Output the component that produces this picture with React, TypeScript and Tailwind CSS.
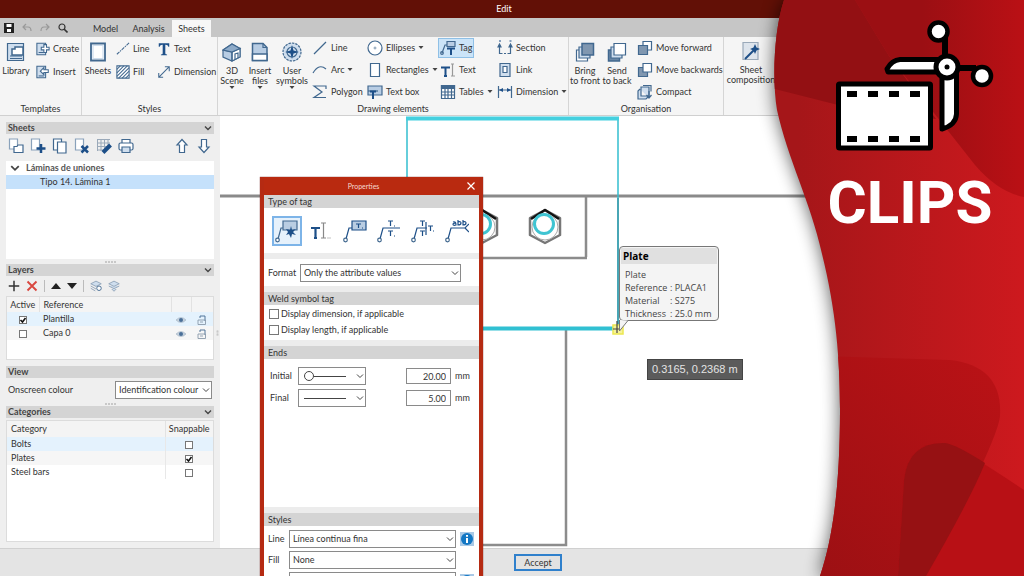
import type { ReactNode } from "react";
import clsx from "clsx";

const blue = "#41688f";
const navy = "#1d4f88";
const pale = "#cfdeee";

type IconProps = {
  children: ReactNode;
  className?: string;
  box?: string;
};

function Icon({ children, className = "size-4", box = "0 0 16 16" }: IconProps) {
  return (
    <svg
      viewBox={box}
      className={clsx("shrink-0", className)}
      fill="none"
      stroke={blue}
      strokeWidth="1.2"
      aria-hidden="true"
    >
      {children}
    </svg>
  );
}

function Caret() {
  return (
    <svg viewBox="0 0 6 4" className="h-1 w-1.5 shrink-0" fill="#444" aria-hidden="true">
      <path d="M.5 0h5L3 3z" />
    </svg>
  );
}

function Chevron({ className = "size-2", width = 1.4 }: { className?: string; width?: number }) {
  return (
    <svg viewBox="0 0 8 8" className={className} fill="none" stroke="#444" strokeWidth={width} aria-hidden="true">
      <path d="M1 2.5l3 3 3-3" />
    </svg>
  );
}

/* ---------- ribbon ---------- */

type BigButtonProps = {
  icon: ReactNode;
  lines: string[];
  caret?: boolean;
  className?: string;
};

function BigButton({ icon, lines, caret, className }: BigButtonProps) {
  return (
    <button type="button" className={clsx("flex shrink-0 flex-col items-center pt-1", className)}>
      {icon}
      <span className="mt-1 flex flex-col items-center leading-[10px] whitespace-nowrap">
        {lines.map((line) => (
          <span key={line}>{line}</span>
        ))}
      </span>
      {caret && <Caret />}
    </button>
  );
}

type SmallButtonProps = {
  icon: ReactNode;
  label: string;
  caret?: boolean;
  active?: boolean;
};

function SmallButton({ icon, label, caret, active }: SmallButtonProps) {
  return (
    <button
      type="button"
      className={clsx(
        "flex h-5 items-center gap-[3px] self-start border px-px whitespace-nowrap",
        active ? "border-[#8fc0e6] bg-[#cbe4f8]" : "border-transparent",
      )}
    >
      {icon}
      {label}
      {caret && <Caret />}
    </button>
  );
}

function Group({ title, className, children }: { title: string; className: string; children: ReactNode }) {
  return (
    <section className={clsx("flex shrink-0 flex-col border-r border-[#d5d5d5] pt-px", className)}>
      <div className="flex flex-1">{children}</div>
      <h2 className="h-[13px] text-center leading-[13px]">{title}</h2>
    </section>
  );
}

function Stack({ className, children }: { className: string; children: ReactNode }) {
  return <div className={clsx("flex shrink-0 flex-col", className)}>{children}</div>;
}

function Ribbon() {
  return (
    <div className="flex overflow-hidden border-b border-[#d0d0d0] bg-[#f5f5f5]">
      <Group title="Templates" className="w-[82px]">
        <BigButton
          className="w-8"
          lines={["Library"]}
          icon={
            <Icon className="size-5" box="0 0 20 20">
              <path d="M1.500 1.500h16v17h-16z" fill={pale} />
              <path d="M4 14h12M4 16.500h12" />
              <path d="M6 7h3V5h8v8H6z" fill="#fff" strokeWidth="1.500" />
            </Icon>
          }
        />
        <Stack className="gap-[3px] pt-px pl-0.5">
          <SmallButton
            label="Create"
            icon={
              <Icon className="size-3.5">
                <path d="M1 1.500h10v13H1z" fill={pale} />
                <path d="M3 12h6" />
                <path d="M9 3h3v3h3v3h-3v3H9V9H6V6h3z" fill="#fff" />
              </Icon>
            }
          />
          <SmallButton
            label="Insert"
            icon={
              <Icon className="size-3.5">
                <path d="M1 1.500h10v13H1z" fill={pale} />
                <path d="M3 12.500h6" />
                <path d="M5 7l4-4v2.500h5v3H9V11z" fill="#fff" />
              </Icon>
            }
          />
        </Stack>
      </Group>

      <Group title="Styles" className="w-[136px]">
        <BigButton
          className="w-8"
          lines={["Sheets"]}
          icon={
            <Icon className="size-5" box="0 0 20 20">
              <path d="M3 1.500h14v17H3z" fill="#fff" stroke={blue} strokeWidth="1.800" />
              <path d="M5 3.500h10v13H5z" stroke={pale} />
            </Icon>
          }
        />
        <Stack className="w-[41px] gap-[3px] pt-px">
          <SmallButton
            label="Line"
            icon={
              <Icon className="size-3.5">
                <path d="M1 14L15 1" strokeDasharray="4 1 1.500 1" />
              </Icon>
            }
          />
          <SmallButton
            label="Fill"
            icon={
              <Icon className="size-3.5">
                <path d="M1 1h14v14H1z" fill="#fff" />
                <path d="M1 5l4-4M1 9l8-8M1 13L13 1M3 15L15 3M7 15l8-8M11 15l4-4" />
              </Icon>
            }
          />
        </Stack>
        <Stack className="gap-[3px] pt-px">
          <SmallButton
            label="Text"
            icon={
              <Icon className="size-3.5">
                <path
                  d="M2 1.500h12v4h-1q-.5-2.500-3-2.500h-.5v10q0 1 2 1.200v.8h-7v-.8q2-.2 2-1.200V3H6Q3.500 3 3 5.500H2z"
                  fill={navy}
                  stroke="none"
                />
              </Icon>
            }
          />
          <SmallButton
            label="Dimension"
            icon={
              <Icon className="size-3.5">
                <path d="M2.500 13.500l11-11M9 2h5v5M2 9v5h5" />
              </Icon>
            }
          />
        </Stack>
      </Group>

      <Group title="Drawing elements" className="w-[351px]">
        <BigButton
          className="w-7"
          caret
          lines={["3D", "Scene"]}
          icon={
            <Icon className="size-5" box="0 0 20 20">
              <path d="M1 8l9-6 8 4.500V15l-8 4-9-4z" fill="#b8cde4" />
              <path d="M10 10l8-3.500V15l-8 4z" fill="#fff" />
              <path d="M1 8l9 2v9M13 17.500V12l3-1v5" />
              <path d="M10 2l8 4.500L10 10 1 8z" fill="#8eabc9" />
            </Icon>
          }
        />
        <BigButton
          className="w-7"
          caret
          lines={["Insert", "files"]}
          icon={
            <Icon className="size-5" box="0 0 20 20">
              <path d="M2.500 1.500H13l4 4v13H2.500z" fill="#b8cde4" strokeWidth="1.500" />
              <path d="M13 1.500v4h4" />
              <path d="M2.500 12H17v6.500H2.500z" fill="#fff" strokeWidth="1.500" />
            </Icon>
          }
        />
        <BigButton
          className="w-9"
          caret
          lines={["User", "symbols"]}
          icon={
            <Icon className="size-5" box="0 0 20 20">
              <circle cx="10" cy="10" r="9" fill={pale} strokeDasharray="2.500 1" />
              <circle cx="10" cy="10" r="5" />
              <path d="M10 3l1.500 5.500L17 10l-5.500 1.500L10 17l-1.500-5.500L3 10l5.500-1.500z" fill={navy} stroke="none" />
            </Icon>
          }
        />
        <Stack className="w-[55px] gap-0.5">
          <SmallButton
            label="Line"
            icon={
              <Icon>
                <path d="M2 14L14 2" />
              </Icon>
            }
          />
          <SmallButton
            label="Arc"
            caret
            icon={
              <Icon>
                <path d="M1 11q6-10 13-4" />
              </Icon>
            }
          />
          <SmallButton
            label="Polygon"
            icon={
              <Icon>
                <path d="M14 5V2H2l8 6-8 5.500h12" />
              </Icon>
            }
          />
        </Stack>
        <Stack className="w-[73px] gap-0.5">
          <SmallButton
            label="Ellipses"
            caret
            icon={
              <Icon>
                <circle cx="8" cy="8" r="7" fill="#fff" />
                <circle cx="8" cy="8" r="1" strokeWidth=".6" />
              </Icon>
            }
          />
          <SmallButton
            label="Rectangles"
            caret
            icon={
              <Icon>
                <path d="M3.500 1.500h9v13h-9z" fill="#fff" />
              </Icon>
            }
          />
          <SmallButton
            label="Text box"
            icon={
              <Icon>
                <path d="M1 2h14v9H1z" fill="#b8cde4" />
                <path d="M1 7h10" />
                <path d="M3 7.500h6M6 7.500V15" stroke={navy} strokeWidth="2" />
              </Icon>
            }
          />
        </Stack>
        <Stack className="w-[57px] gap-0.5">
          <SmallButton
            label="Tag"
            active
            icon={
              <Icon>
                <path d="M7 1.500h8v5H7z" fill="#b8cde4" />
                <path d="M2 13L5 5h2" />
                <circle cx="2" cy="13" r="1.300" />
                <path d="M7 8.500h8M11 8.500V15" stroke={navy} strokeWidth="2" />
              </Icon>
            }
          />
          <SmallButton
            label="Text"
            icon={
              <Icon>
                <path d="M1 5.500h9M5.500 5.500V14M4 14h3" stroke={navy} strokeWidth="2" />
                <path d="M12.500 2v12M11 2h3M11 14h4" stroke="#999" />
              </Icon>
            }
          />
          <SmallButton
            label="Tables"
            caret
            icon={
              <Icon>
                <path d="M1.500 1.500h13v13h-13z" fill="#fff" />
                <path d="M1.500 1.500h13v3h-13z" fill={blue} />
                <path d="M1.500 8h13M1.500 11h13M5 2v12M8 2v12M11.500 2v12" />
              </Icon>
            }
          />
        </Stack>
        <Stack className="gap-0.5">
          <SmallButton
            label="Section"
            icon={
              <Icon>
                <path d="M2.500 6v7.500h3M13.500 6v7.500h-3" />
                <path d="M7 13.500h2" />
                <path d="M1 7l1.500-3L4 7zM12 7l1.500-3L15 7z" fill={navy} />
                <path d="M2 1h2M12.500 1h2" stroke={navy} />
              </Icon>
            }
          />
          <SmallButton
            label="Link"
            icon={
              <Icon>
                <path d="M3 1.500h10v13H3z" fill={pale} />
                <path d="M6 4.500h4v6H6z" fill="#fff" />
              </Icon>
            }
          />
          <SmallButton
            label="Dimension"
            caret
            icon={
              <Icon>
                <path d="M1.500 2v12M14.500 2v12M2 6h12" />
                <path d="M2 6l4-2v4zM14 6l-4-2v4z" fill={navy} stroke="none" />
              </Icon>
            }
          />
        </Stack>
      </Group>

      <Group title="Organisation" className="w-[155px]">
        <BigButton
          className="w-8"
          lines={["Bring", "to front"]}
          icon={
            <Icon className="size-5" box="0 0 20 20">
              <path d="M1.500 8h11v11h-11z" fill="#fff" />
              <path d="M4 5h11v11H4z" fill={pale} />
              <path d="M7 1.500h11.500V13H7z" fill="#8097b0" strokeWidth="1.500" />
            </Icon>
          }
        />
        <BigButton
          className="w-8"
          lines={["Send", "to back"]}
          icon={
            <Icon className="size-5" box="0 0 20 20">
              <path d="M1.500 8h11v11h-11z" fill="#6886a5" strokeWidth="1.500" />
              <path d="M4 5h11v11H4z" fill={pale} />
              <path d="M7 1.500h11.500V13H7z" fill="#fff" />
            </Icon>
          }
        />
        <Stack className="gap-0.5 pl-0.5">
          <SmallButton
            label="Move forward"
            icon={
              <Icon>
                <path d="M6 1.500h8.500V10H6z" fill="#fff" />
                <path d="M1.500 5.500h9v9h-9z" fill="#8097b0" />
              </Icon>
            }
          />
          <SmallButton
            label="Move backwards"
            icon={
              <Icon>
                <path d="M1.500 5.500h9v9h-9z" fill="#8097b0" />
                <path d="M6 1.500h8.500V10H6z" fill="#fff" />
              </Icon>
            }
          />
          <SmallButton
            label="Compact"
            icon={
              <Icon>
                <path d="M3 5L1 7v8h8l2-2M4 3h8v9H4z" fill={pale} />
                <path d="M6 1.500h8v6M12 7v7M9.500 11l2.500 3 2.500-3" />
              </Icon>
            }
          />
        </Stack>
      </Group>

      <BigButton
        className="w-[54px]"
        lines={["Sheet", "composition"]}
        icon={
          <Icon className="size-5" box="0 0 20 20">
            <path d="M2 1.500h15v17H2z" fill="#dde4ec" stroke="#9aa9b9" />
            <path d="M4 18L13 9" stroke={navy} strokeWidth="2" />
            <path d="M14 3l1.500 3.500L19 8l-3.500 1.500L14 13l-1.500-3.500L9 8l3.500-1.500z" fill={navy} stroke="none" />
          </Icon>
        }
      />
    </div>
  );
}

/* ---------- side panel ---------- */

function PanelHeader({ title, chevron = true }: { title: string; chevron?: boolean }) {
  return (
    <div className="flex h-3 items-center justify-between bg-[#d4d4d4] px-0.5">
      <h2 className="leading-3 font-bold text-[#444]">{title}</h2>
      {chevron && (
        <button type="button" aria-label={`Collapse ${title}`}>
          <Chevron />
        </button>
      )}
    </div>
  );
}

function Grip() {
  return (
    <div className="flex h-[5px] items-center justify-center gap-px">
      {[0, 1, 2, 3].map((n) => (
        <span key={n} className="size-0.5 rounded-full bg-[#bbb]" />
      ))}
    </div>
  );
}

function Check({ label, checked, size = "size-2" }: { label: string; checked?: boolean; size?: string }) {
  return (
    <span className="inline-grid place-items-center align-middle">
      <input
        id={label}
        type="checkbox"
        aria-label={label}
        defaultChecked={checked}
        className={clsx("peer col-start-1 row-start-1 appearance-none border border-[#777] bg-white", size)}
      />
      <svg
        viewBox="0 0 8 8"
        className="pointer-events-none invisible col-start-1 row-start-1 size-2 peer-checked:visible"
        fill="none"
        stroke="#111"
        strokeWidth="1.600"
        aria-hidden="true"
      >
        <path d="M1.500 4l2 2 3-4" />
      </svg>
    </span>
  );
}

const sheetTools = [
  {
    name: "New group",
    art: (
      <>
        <path d="M1.500 1h8v10h-8z" fill="#fff" stroke="#8aa2bb" />
        <path d="M6 8.500h3L10 7h5v7.500H6z" fill="#fff" />
      </>
    ),
  },
  {
    name: "Add sheet",
    art: (
      <>
        <path d="M1.500 1h8v11h-8z" fill="#fff" stroke="#8aa2bb" />
        <path d="M11 6v9M6.500 10.500h9" stroke={navy} strokeWidth="2.500" />
      </>
    ),
  },
  {
    name: "Copy sheet",
    art: (
      <>
        <path d="M1.500 1h8v11h-8z" fill="#fff" />
        <path d="M5.500 4h8.500v11H5.500z" fill="#fff" />
      </>
    ),
  },
  {
    name: "Delete sheet",
    art: (
      <>
        <path d="M1.500 1h8v11h-8z" fill="#fff" stroke="#8aa2bb" />
        <path d="M7.500 8l6.500 6.500M14 8l-6.500 6.500" stroke={navy} strokeWidth="2.500" />
      </>
    ),
  },
  {
    name: "Edit grid",
    art: (
      <>
        <path d="M1 1.500h13M1 5h13M1 8.500h13M1 12h8M1.500 1v12M5 1v12M8.500 1v12M12 1v8" stroke="#9aa9b9" strokeWidth="1" />
        <path d="M7 14.500L14.500 7" stroke={navy} strokeWidth="4" />
      </>
    ),
  },
  {
    name: "Print",
    art: (
      <>
        <path d="M4 5V1.500h8V5" fill="#fff" />
        <rect x="1" y="5" width="14" height="7" rx="1.500" fill="#fff" />
        <path d="M4 9h8v5.500H4z" fill={pale} />
      </>
    ),
  },
];

function SheetsPanel() {
  return (
    <section>
      <PanelHeader title="Sheets" />
      <div className="flex h-[27px] items-start gap-1.5 px-0.5 pt-1">
        {sheetTools.map((tool) => (
          <button key={tool.name} type="button" aria-label={tool.name}>
            <Icon>{tool.art}</Icon>
          </button>
        ))}
        <button type="button" aria-label="Move up" className="ml-auto">
          <Icon>
            <path d="M8 1.500L13 7h-2.500v7.500h-5V7H3z" fill="#fff" />
          </Icon>
        </button>
        <button type="button" aria-label="Move down">
          <Icon>
            <path d="M8 14.500L13 9h-2.500V1.500h-5V9H3z" fill="#fff" />
          </Icon>
        </button>
      </div>
      <ul className="h-[98px] bg-white">
        <li className="flex h-3.5 items-center gap-1.5 px-1 font-bold text-[#555]">
          <Chevron className="size-2.5" />
          Láminas de uniones
        </li>
        <li className="flex h-3.5 items-center bg-[#c5e1fb] pl-[34px]">Tipo 14. Lámina 1</li>
      </ul>
    </section>
  );
}

function EyeIcon() {
  return (
    <Icon className="inline-block size-2.5" box="0 0 10 10">
      <path d="M0 5q5-5 10 0-5 5-10 0z" fill="#c4d0dc" stroke="#a3b4c5" strokeWidth=".6" />
      <circle cx="5" cy="5" r="2" fill="#4a6f98" stroke="none" />
    </Icon>
  );
}

function LockIcon() {
  return (
    <Icon className="inline-block size-2.5" box="0 0 10 10">
      <path d="M3 3V1h5v5" strokeWidth=".9" />
      <path d="M1 5h7.500v4.500H1zM3 7h3" stroke="#8a9aaa" strokeWidth=".9" />
    </Icon>
  );
}

const layers = [
  { name: "Plantilla", active: true, tint: "bg-[#e4f2fd]" },
  { name: "Capa 0", active: false, tint: "bg-[#f6f6f6]" },
];

function LayersPanel() {
  return (
    <section>
      <PanelHeader title="Layers" />
      <div className="flex h-5 items-center gap-1.5 px-0.5">
        <button type="button" aria-label="Add layer">
          <Icon className="size-3">
            <path d="M8 1v14M1 8h14" stroke="#333" strokeWidth="2" />
          </Icon>
        </button>
        <button type="button" aria-label="Delete layer">
          <Icon className="size-3">
            <path d="M2 2l12 12M14 2L2 14" stroke="#d9473f" strokeWidth="2.500" />
          </Icon>
        </button>
        <span className="h-3 w-px bg-[#bbb]" />
        <button type="button" aria-label="Raise layer">
          <Icon className="size-2.5" box="0 0 10 10">
            <path d="M0 8l5-6 5 6z" fill="#222" stroke="none" />
          </Icon>
        </button>
        <button type="button" aria-label="Lower layer">
          <Icon className="size-2.5" box="0 0 10 10">
            <path d="M0 2l5 6 5-6z" fill="#222" stroke="none" />
          </Icon>
        </button>
        <span className="h-3 w-px bg-[#bbb]" />
        <button type="button" aria-label="Show layers">
          <Icon className="size-3">
            <path d="M1 5l7-3.500L15 5 8 8.500zM1 8l7 4M1 11l6 3.500" fill={pale} stroke="#8ea3b8" />
            <circle cx="12" cy="11" r="3" fill="#fff" />
          </Icon>
        </button>
        <button type="button" aria-label="Merge layers">
          <Icon className="size-3">
            <path d="M1 5l7-3.500L15 5 8 8.500zM1 8l7 3.500L15 8M5 12l3 3 3-3" fill={pale} stroke="#8ea3b8" />
          </Icon>
        </button>
      </div>
      <div className="h-16 border border-[#dcdcdc] bg-white">
        <table className="w-full table-fixed border-collapse text-left">
          <thead className="h-[15px] bg-[#f4f4f4]">
            <tr>
              <th className="w-8 border-r border-[#e2e2e2] text-center font-normal">Active</th>
              <th className="pl-1 font-normal">Reference</th>
              <th className="w-5 border-x border-[#e2e2e2]" />
              <th className="w-[22px]" />
            </tr>
          </thead>
          <tbody>
            {layers.map((layer) => (
              <tr key={layer.name} className={clsx("h-3.5", layer.tint)}>
                <td className="text-center">
                  <Check label={`${layer.name} active`} checked={layer.active} />
                </td>
                <td className="pl-1">{layer.name}</td>
                <td className="text-center">
                  <EyeIcon />
                </td>
                <td className="text-center">
                  <LockIcon />
                </td>
              </tr>
            ))}
          </tbody>
        </table>
      </div>
    </section>
  );
}

function ViewPanel() {
  return (
    <section className="mt-1.5">
      <PanelHeader title="View" chevron={false} />
      <div className="flex h-[23px] items-center justify-between px-0.5">
        <label htmlFor="onscreen-colour">Onscreen colour</label>
        <span className="grid w-[97px] items-center">
          <select
            id="onscreen-colour"
            className="col-start-1 row-start-1 h-[18px] appearance-none border border-[#8a8a8a] bg-white pl-[3px]"
          >
            <option>Identification colour</option>
          </select>
          <Chevron
            width={1}
            className="pointer-events-none col-start-1 row-start-1 mr-0.5 size-2 justify-self-end"
          />
        </span>
      </div>
    </section>
  );
}

const categories = [
  { name: "Bolts", snap: false, tint: "bg-[#e4f2fd]" },
  { name: "Plates", snap: true, tint: "bg-[#f6f6f6]" },
  { name: "Steel bars", snap: false, tint: "bg-white" },
];

function CategoriesPanel() {
  return (
    <section className="flex flex-1 flex-col">
      <PanelHeader title="Categories" />
      <div className="mt-0.5 flex-1 border border-[#dcdcdc] bg-white">
        <table className="w-full table-fixed border-collapse text-left">
          <thead className="h-4 bg-[#f4f4f4]">
            <tr>
              <th className="border-r border-[#e2e2e2] pl-1 font-normal">Category</th>
              <th className="w-12 text-center font-normal">Snappable</th>
            </tr>
          </thead>
          <tbody>
            {categories.map((row) => (
              <tr key={row.name} className={clsx("h-3.5", row.tint)}>
                <td className="border-r border-[#e8e8e8] pl-1">{row.name}</td>
                <td className="text-center">
                  <Check label={`${row.name} snappable`} checked={row.snap} />
                </td>
              </tr>
            ))}
          </tbody>
        </table>
      </div>
    </section>
  );
}

/* ---------- drawing area ---------- */

function Bolt({ x }: { x: number }) {
  return (
    <g transform={`translate(${x} 226)`} fill="none">
      <path d="M0-16L15-8V9L0 17-15 9V-8z" stroke="#777" strokeWidth="2.500" fill="#fff" strokeLinejoin="round" />
      <path d="M-14-7L0-16 14-7" stroke="#111" strokeWidth="2.500" strokeLinejoin="round" />
      <circle cy="1" r="13" stroke="#aaa" strokeWidth="1" />
      <circle cx="-1" cy="-2" r="9.500" stroke="#3fc4d2" strokeWidth="3" />
    </g>
  );
}

const plateInfo = [
  ["Reference", "PLACA1"],
  ["Material", "S275"],
  ["Thickness", "25.0 mm"],
];

function Canvas() {
  return (
    <main className="relative flex-1 overflow-hidden bg-white">
      <svg viewBox="220 116 804 432" className="absolute top-0 left-0 h-[432px] w-[804px]" fill="none" aria-hidden="true">
        <path d="M220 196H824" stroke="#8a8a8a" strokeWidth="3" />
        <path d="M586 197V257M400 258H587" stroke="#8c8c8c" strokeWidth="2.500" />
        <path d="M566 330V545H400" stroke="#8c8c8c" strokeWidth="2.500" />
        <Bolt x={482} />
        <Bolt x={545} />
        <path d="M407 117V200M618 117V328" stroke="#35bfd0" strokeWidth="1.500" />
        <path d="M618 198V328" stroke="#2b7f90" strokeWidth="1" />
        <path d="M406 118.500H619" stroke="#45d0df" strokeWidth="4" />
        <path d="M407 328.500H619" stroke="#30c0d2" strokeWidth="4" />
        <path d="M613 325h10v9h-10z" stroke="#ece750" strokeWidth="1.500" fill="#f6f29a" />
        <path d="M617 321v12M613 329h8" stroke="#444" strokeWidth="1.200" />
      </svg>

      <div className="absolute top-[130px] left-[399px] h-[75px] w-[100px] rounded-sm border border-[#777] bg-[#f4f4f4] px-px pt-px font-['Open_Sans','Noto_Sans',sans-serif] text-[9px] text-[#444]">
        <h3 className="h-4 bg-[#e0e0e0] pl-0.5 text-[10px] leading-4 font-bold text-black">Plate</h3>
        <p className="mt-1 pl-1 leading-[13px]">Plate</p>
        <dl className="grid grid-cols-[45px_1fr] pl-1 leading-[13px] whitespace-nowrap">
          {plateInfo.map(([name, value]) => (
            <div key={name} className="contents">
              <dt>{name}</dt>
              <dd>: {value}</dd>
            </div>
          ))}
        </dl>
        <svg viewBox="0 0 12 12" className="absolute top-[73px] -left-px size-3" aria-hidden="true">
          <path d="M.5 0V11L9 .5" fill="#f4f4f4" stroke="#777" />
        </svg>
      </div>

      <output className="absolute top-[243px] left-[427px] border border-[#444] bg-[#5b5b5b] px-1 font-['Liberation_Sans',sans-serif] text-[11px] leading-[19px] whitespace-nowrap text-[#e4e4e4]">
        0.3165, 0.2368 m
      </output>
    </main>
  );
}

/* ---------- properties dialog ---------- */

const tagTypes = [
  {
    name: "Attribute tag",
    art: (
      <>
        <path d="M8 2h14v9H8z" fill="#b9cde2" />
        <path d="M3 20L6 9h2" />
        <path d="M16 7l1 4 4-1-3 3 3 3-4-1-1 4-2-4-3 1 2-3-2-3 4 1z" fill={navy} stroke="none" />
      </>
    ),
    dot: true,
  },
  {
    name: "Plain text",
    art: (
      <>
        <path d="M2 9h9M6.500 9v10M5 19h3" stroke={navy} strokeWidth="2.200" />
        <path d="M14.500 4v15M12 4h5M12 19h5" stroke="#888" />
        <path d="M18 19h4" stroke="#ccc" />
      </>
    ),
  },
  {
    name: "Boxed tag",
    art: (
      <>
        <path d="M9 2h14v9H9z" fill="#b9cde2" stroke={navy} />
        <path d="M3 20L6 9h3M13 5h5M15.500 5v4M19 9h1" stroke={navy} />
      </>
    ),
    dot: true,
  },
  {
    name: "Two line tag",
    art: (
      <path d="M3 20L6 9h17M11 2h5M13.500 2v5M17 7h1M11 12h5M13.500 12v5M17 17h1" stroke={navy} />
    ),
    dot: true,
  },
  {
    name: "Three field tag",
    art: (
      <path
        d="M3 20L6 9h10M9 2h5M11.500 2v5M9 12h5M11.500 12v5M15 3v13M17 7h5M19.500 7v5M14.500 7h1M22 12h1"
        stroke={navy}
      />
    ),
    dot: true,
  },
  {
    name: "Weld tag",
    art: (
      <path
        d="M3 20L6 9h14l4-4M20 9l4 4M8 3q3-1 3 3-3 1-3-1 0-1 3-1M13 1v5q3 0 3-2t-3-1M18 1v5q3 0 3-2t-3-1"
        stroke={navy}
      />
    ),
    dot: true,
  },
];

type ComboProps = {
  id: string;
  value?: string;
  art?: ReactNode;
  className: string;
};

function Combo({ id, value, art, className }: ComboProps) {
  return (
    <span className={clsx("grid shrink-0 items-center", className)}>
      <select
        id={id}
        className="col-start-1 row-start-1 h-[18px] w-full appearance-none border border-[#8a8a8a] bg-white pl-[3px]"
      >
        <option aria-label={value ?? id}>{value}</option>
      </select>
      {art}
      <Chevron
        width={1}
        className="pointer-events-none col-start-1 row-start-1 mr-0.5 size-2 justify-self-end"
      />
    </span>
  );
}

function SectionTitle({ children }: { children: string }) {
  return <h3 className="h-[13px] bg-[#d4d4d4] pl-1 leading-[13px]">{children}</h3>;
}

const ends = [
  { id: "Initial", size: "20.00", circle: true },
  { id: "Final", size: "5.00", circle: false },
];

function PropertiesDialog() {
  return (
    <div
      role="dialog"
      aria-label="Properties"
      className="absolute top-[177px] -bottom-6 left-[260px] flex w-[223px] flex-col border-x-4 border-[#b52a12] bg-[#ececec] shadow-[0_0_1px_#611]"
    >
      <header className="grid h-[18px] shrink-0 grid-cols-[1fr_auto_1fr] items-center bg-[#b92a10]">
        <h2 className="col-start-2 pr-4 text-[7px] text-[#f6d8d0]">Properties</h2>
        <button type="button" aria-label="Close" className="mr-1 justify-self-end">
          <Icon className="size-2" box="0 0 8 8">
            <path d="M.5.5l7 7M7.500.5l-7 7" stroke="#fff" />
          </Icon>
        </button>
      </header>

      <SectionTitle>Type of tag</SectionTitle>
      <div className="flex h-[45px] items-center gap-1 bg-white pl-2">
        {tagTypes.map((tag, index) => (
          <button
            key={tag.name}
            type="button"
            aria-label={tag.name}
            className={clsx(
              "grid size-[30px] place-items-center border-2",
              index === 0 ? "border-[#7db4e8] bg-[#e6f1fb]" : "border-transparent",
            )}
          >
            <Icon className="size-6" box="0 0 24 24">
              {tag.art}
              {tag.dot && <circle cx="2.500" cy="21" r="1.800" fill="#fff" />}
            </Icon>
          </button>
        ))}
      </div>

      <div className="mt-1.5 flex h-[27px] items-center justify-between bg-white pr-[18px] pl-1">
        <label htmlFor="Format">Format</label>
        <Combo id="Format" value="Only the attribute values" className="w-[161px]" />
      </div>

      <div className="mt-1.5">
        <SectionTitle>Weld symbol tag</SectionTitle>
        <div className="flex flex-col bg-white pt-px pb-0.5 pl-[5px]">
          {["Display dimension, if applicable", "Display length, if applicable"].map((text) => (
            <label key={text} className="flex h-4 items-center gap-0.5">
              <Check label={text} size="size-2.5" />
              {text}
            </label>
          ))}
        </div>
      </div>

      <div className="mt-1.5 flex h-[161px] shrink-0 flex-col bg-white">
        <SectionTitle>Ends</SectionTitle>
        <div className="flex flex-col gap-1 px-1.5 pt-2">
          {ends.map((end) => (
            <div key={end.id} className="flex items-center">
              <label htmlFor={end.id} className="w-7">
                {end.id}
              </label>
              <Combo
                id={end.id}
                className="w-[68px]"
                art={
                  <svg
                    viewBox="0 0 44 12"
                    className="pointer-events-none col-start-1 row-start-1 ml-1.5 h-3 w-11"
                    fill="none"
                    stroke="#444"
                    aria-hidden="true"
                  >
                    {end.circle && <circle cx="5" cy="6" r="4.500" />}
                    <path d={end.circle ? "M10 6.500h32" : "M0 6.500h42"} />
                  </svg>
                }
              />
              <input
                id={`${end.id}-size`}
                aria-label={`${end.id} size`}
                defaultValue={end.size}
                className="mr-1 ml-auto h-4 w-[45px] border border-[#8a8a8a] bg-white px-1 text-right"
              />
              <label htmlFor={`${end.id}-size`} className="w-[18px]">
                mm
              </label>
            </div>
          ))}
        </div>
      </div>

      <div className="mt-1.5 flex-1 bg-white">
        <SectionTitle>Styles</SectionTitle>
        <div className="flex flex-col gap-[3px] pt-1 pl-1">
          {[
            ["Line", "Línea continua fina"],
            ["Fill", "None"],
            ["", ""],
          ].map(([name, value]) => (
            <div key={name} className="flex items-center">
              <label htmlFor={`style-${name}`} className="w-[21px]">
                {name}
              </label>
              <Combo id={`style-${name}`} value={value} className="w-[167px]" />
              {name !== "Fill" && (
                <button type="button" aria-label="Style details" className="ml-1">
                  <Icon className="size-3.5" box="0 0 14 14">
                    <path d="M0 0h14v14H0z" fill="#a9c9e6" stroke="none" />
                    <circle cx="7" cy="7" r="6" fill="#1277c4" stroke="none" />
                    <path d="M7 6v5M7 3v1.800" stroke="#fff" strokeWidth="2" />
                  </Icon>
                </button>
              )}
            </div>
          ))}
        </div>
      </div>
    </div>
  );
}

/* ---------- red clips banner ---------- */

const bannerEdge =
  "M44 0C34 30 32 80 37 110C48 160 70 200 82 254C96 310 100 360 100 410C100 480 94 535 80 576H284V0z";

function Banner() {
  return (
    <aside className="pointer-events-none absolute inset-y-0 right-0 w-[284px]">
      <svg
        viewBox="0 0 284 576"
        preserveAspectRatio="none"
        className="absolute inset-0 h-full w-full"
        aria-hidden="true"
      >
        <defs>
          <linearGradient id="banner-red" x1="0" x2="1" y1="0" y2="0">
            <stop offset=".2" stopColor="#a51619" />
            <stop offset="1" stopColor="#cd191e" />
          </linearGradient>
          <linearGradient id="banner-top" x1="0" x2="1" y1="0" y2="0">
            <stop offset=".4" stopColor="#9b0f13" />
            <stop offset="1" stopColor="#ba1015" />
          </linearGradient>
          <linearGradient id="banner-low" x1="0" x2="1" y1="1" y2="0">
            <stop offset="0" stopColor="#9b1013" />
            <stop offset="1" stopColor="#ba1216" />
          </linearGradient>
          <clipPath id="banner-clip">
            <path d={bannerEdge} />
          </clipPath>
          <filter id="banner-blur" x="-40%" width="180%" y="-10%" height="120%">
            <feGaussianBlur stdDeviation="9" />
          </filter>
        </defs>
        <path d={bannerEdge} fill="#000" opacity=".65" filter="url(#banner-blur)" />
        <g clipPath="url(#banner-clip)">
          <path d="M0 0h284v576H0z" fill="url(#banner-red)" />
          <path d="M115 0H284V197Q258 192 235 165L149 56z" fill="url(#banner-top)" />
          <path d="M0 80L35 89 110 108 196 119 149 56 115 0H0z" fill="#931013" />
          <path d="M80 356L210 360Q263 366 260 416Q258 440 186 576H60z" fill="url(#banner-low)" />
          <path d="M158 576L164 480Q168 442 205 443Q215 444 284 490V576z" fill="#b81015" />
          <path d="M158 576L164 480Q168 442 205 443Q215 444 245 463Q230 500 186 576z" fill="#961113" />
        </g>
      </svg>

      <div className="relative flex flex-col items-center pt-[18px] pl-16">
        <svg viewBox="832 18 164 136" className="h-[136px] w-[164px]" fill="#fff" stroke="#000" aria-hidden="true">
          <path d="M945 67L945 36M947 68H976" strokeWidth="6" />
          <path d="M938 59.500H900Q892 60 887 69L888 72H938z" strokeWidth="5" strokeLinejoin="round" />
          <path d="M942 74V129Q956 125 956.500 114V74z" strokeWidth="5" strokeLinejoin="round" />
          <circle cx="938.500" cy="31.500" r="9" strokeWidth="4.500" />
          <circle cx="982" cy="76" r="9" strokeWidth="4.500" />
          <circle cx="947" cy="67" r="11" strokeWidth="5" />
          <circle cx="947" cy="67" r="2.500" fill="#000" stroke="none" />
          <rect x="838.500" y="84" width="92" height="64" rx="1" strokeWidth="5" />
          <path
            d="M847 94H857M868 94H878M889 94H899M910 94H920M847 139H857M868 139H878M889 139H899M910 139H920"
            strokeWidth="6"
          />
        </svg>
        <p className="mt-3 pr-2 font-[Roboto,sans-serif] text-[60px] leading-[74px] font-bold text-white">CLIPS</p>
      </div>
    </aside>
  );
}

export default function App() {
  return (
    <div className="relative flex min-h-screen flex-col overflow-hidden bg-[#efefef] font-[Lato,'Open_Sans',sans-serif] text-[9px] leading-3 text-[#333]">
      <header className="h-[18px] bg-[#621006] pr-4 text-center leading-[18px] text-white">Edit</header>

      <nav className="flex h-[19px] items-end bg-[#c6c6c6] pl-1">
        <div className="flex w-20 items-center gap-2 self-center">
          <button type="button" aria-label="Save">
            <Icon className="size-2.5" box="0 0 10 10">
              <path d="M0 0h10v10H0z" fill="#222" stroke="none" />
              <path d="M2.500 1h5v3h-5zM3 6h4v3H3z" fill="#fff" stroke="none" />
            </Icon>
          </button>
          <button type="button" aria-label="Undo">
            <Icon className="size-2.5" box="0 0 10 10">
              <path d="M4 1L1 4l3 3M1 4h5q3 0 3 4" stroke="#999" />
            </Icon>
          </button>
          <button type="button" aria-label="Redo">
            <Icon className="size-2.5" box="0 0 10 10">
              <path d="M6 1l3 3-3 3M9 4H4Q1 4 1 8" stroke="#999" />
            </Icon>
          </button>
          <button type="button" aria-label="Search">
            <Icon className="size-2.5" box="0 0 10 10">
              <circle cx="4" cy="4" r="3" stroke="#333" />
              <path d="M6 6l3.500 3.500" stroke="#333" strokeWidth="1.600" />
            </Icon>
          </button>
        </div>
        {["Model", "Analysis", "Sheets"].map((tab) => (
          <button
            key={tab}
            type="button"
            className={clsx("h-[17px]", tab === "Sheets" ? "ml-0.5 w-[39px] bg-[#f7f7f7]" : "w-[43px]")}
          >
            {tab}
          </button>
        ))}
      </nav>

      <Ribbon />

      <div className="flex flex-1">
        <div className="flex w-[220px] shrink-0 items-center">
          <div className="flex flex-1 flex-col self-stretch pt-1.5 pr-0.5 pb-1.5 pl-1.5">
            <SheetsPanel />
            <Grip />
            <LayersPanel />
            <ViewPanel />
            <Grip />
            <CategoriesPanel />
          </div>
          <div className="w-1 rotate-90">
            <Grip />
          </div>
        </div>
        <Canvas />
      </div>

      <footer className="flex h-7 items-center justify-center border-t border-[#d0d0d0] bg-[#e4e4e4] pl-[52px]">
        <button
          type="button"
          className="h-[17px] w-12 border-2 border-[#2f80cc] bg-[#e2e2e2] leading-3"
        >
          Accept
        </button>
      </footer>

      <PropertiesDialog />
      <Banner />
    </div>
  );
}
